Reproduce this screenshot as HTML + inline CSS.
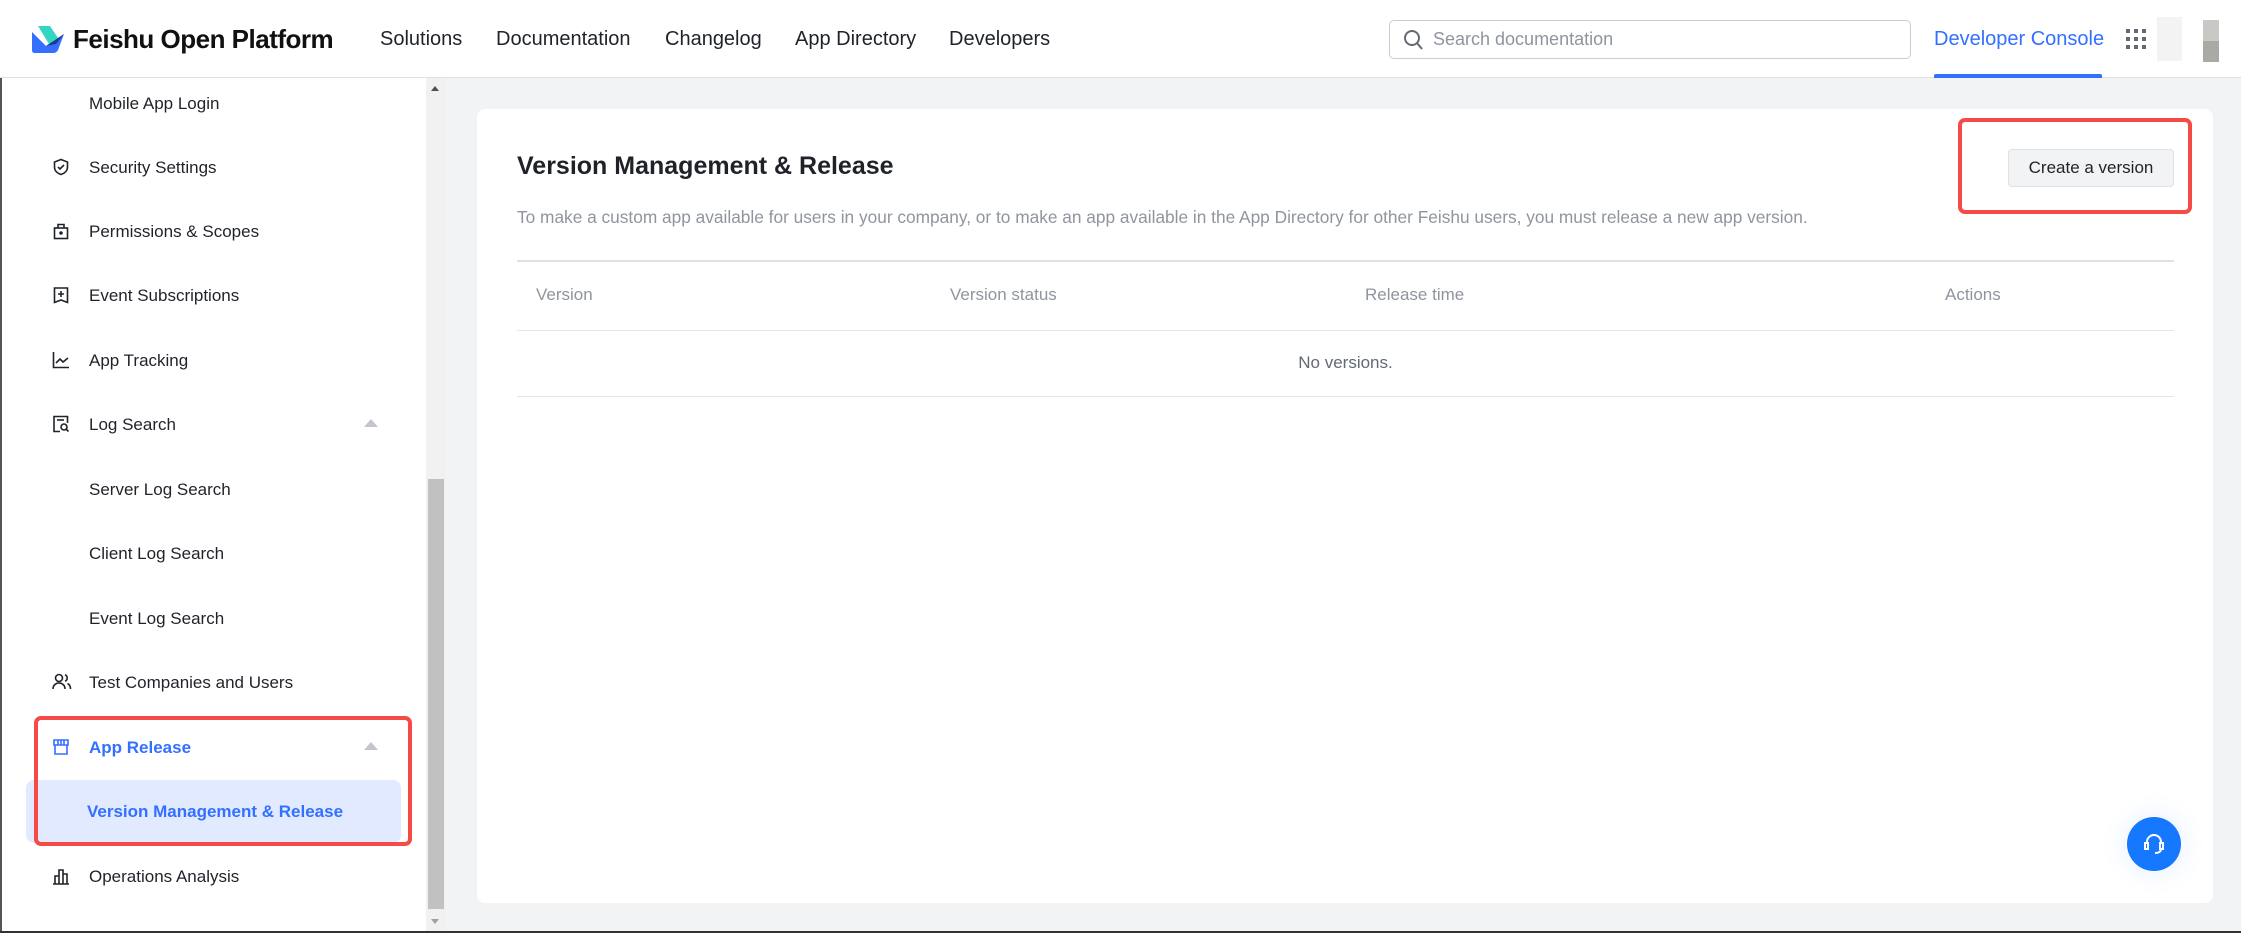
<!DOCTYPE html>
<html><head><meta charset="utf-8"><style>
*{box-sizing:border-box;margin:0;padding:0}
body{width:2241px;height:933px;overflow:hidden;background:#f2f3f5;font-family:"Liberation Sans",Arial,sans-serif;color:#1f2329;position:relative}
.hdr{position:absolute;left:0;top:0;width:2241px;height:78px;background:#fff;border-bottom:1px solid #dee0e3;z-index:5}
.abs{position:absolute;white-space:nowrap}
.nav{font-size:20px;top:28px;color:#1f2329}
.side{position:absolute;left:0;top:0;width:446px;height:933px;background:#fff;border-left:2px solid #555}
.item{position:absolute;left:87px;font-size:17px;color:#1f2329;white-space:nowrap}
.ic{position:absolute;left:50px}
.caret{position:absolute;left:362px;width:0;height:0;border-left:7px solid transparent;border-right:7px solid transparent;border-bottom:8px solid #c2c6cc}
.card{position:absolute;left:477px;top:109px;width:1736px;height:794px;background:#fff;border-radius:8px}
.th{position:absolute;top:285px;font-size:17px;color:#8f959e}
</style></head><body>
<div class="hdr">
  <svg class="abs" style="left:32px;top:24px" width="34" height="30" viewBox="0 0 34 30"><path d="M6 2h12l8 12-9 6z" fill="#33d6c0"/><path d="M0 8l14 14 18-12-6 16c-1 2-3 3-5 3H3c-2 0-3-1-3-3z" fill="#3370ff"/><path d="M14 22L32 10l-8 10z" fill="#1e3a8a"/></svg>
  <div class="abs" style="left:73px;top:24px;font-size:26px;font-weight:bold;letter-spacing:-0.5px;color:#111">Feishu Open Platform</div>
  <div class="abs nav" style="left:380px">Solutions</div>
  <div class="abs nav" style="left:496px">Documentation</div>
  <div class="abs nav" style="left:665px">Changelog</div>
  <div class="abs nav" style="left:795px">App Directory</div>
  <div class="abs nav" style="left:949px">Developers</div>
  <div class="abs" style="left:1389px;top:20px;width:522px;height:39px;border:1px solid #c9cdd4;border-radius:5px"></div>
  <svg class="abs" style="left:1403px;top:29px" width="20" height="22" viewBox="0 0 20 22"><circle cx="9" cy="9" r="7" fill="none" stroke="#646a73" stroke-width="2"/><path d="M14 14l5 6" stroke="#646a73" stroke-width="2"/></svg>
  <div class="abs" style="left:1433px;top:29px;font-size:18px;color:#8f959e">Search documentation</div>
  <div class="abs" style="left:1934px;top:28px;font-size:20px;color:#3370ff">Developer Console</div>
  <div class="abs" style="left:1934px;top:74px;width:168px;height:4px;background:#3370ff;border-radius:2px 2px 0 0"></div>
  <svg class="abs" style="left:2126px;top:29px" width="20" height="20" viewBox="0 0 20 20" fill="#646a73"><rect x="0" y="0" width="4" height="4"/><rect x="8" y="0" width="4" height="4"/><rect x="16" y="0" width="4" height="4"/><rect x="0" y="8" width="4" height="4"/><rect x="8" y="8" width="4" height="4"/><rect x="16" y="8" width="4" height="4"/><rect x="0" y="16" width="4" height="4"/><rect x="8" y="16" width="4" height="4"/><rect x="16" y="16" width="4" height="4"/></svg>
  <div class="abs" style="left:2157px;top:17px;width:25px;height:44px;background:#f3f3f3"></div>
  <div class="abs" style="left:2203px;top:20px;width:16px;height:21px;background:#c8c8c4"></div>
  <div class="abs" style="left:2203px;top:41px;width:16px;height:21px;background:#a9a9a6"></div>
</div>
<div class="side">
  <div class="item" style="top:94px">Mobile App Login</div>
  <svg class="ic" style="top:158px" width="18" height="18" viewBox="0 0 18 18" fill="none" stroke="#1f2329" stroke-width="1.6"><path d="M9 1.5l6.5 2.5v5c0 4-3 6.5-6.5 7.5C5.5 15.5 2.5 13 2.5 9V4z"/><path d="M6 9l2 2 4-4"/></svg>
  <div class="item" style="top:158px">Security Settings</div>
  <svg class="ic" style="top:222px" width="18" height="18" viewBox="0 0 18 18" fill="none" stroke="#1f2329" stroke-width="1.6"><rect x="2.5" y="6" width="13" height="10.5"/><path d="M6 6V2.5h6V6"/><circle cx="9" cy="11" r="1" fill="#1f2329"/></svg>
  <div class="item" style="top:222px">Permissions &amp; Scopes</div>
  <svg class="ic" style="top:286px" width="18" height="18" viewBox="0 0 18 18" fill="none" stroke="#1f2329" stroke-width="1.6"><path d="M2.5 2h13v14.5L9 14l-6.5 2.5z"/><path d="M9 5v6M6 8h6"/></svg>
  <div class="item" style="top:286px">Event Subscriptions</div>
  <svg class="ic" style="top:351px" width="18" height="18" viewBox="0 0 18 18" fill="none" stroke="#1f2329" stroke-width="1.6"><path d="M1.5 1v15.5H17"/><path d="M4 12l4-4 3 3 5-4"/></svg>
  <div class="item" style="top:351px">App Tracking</div>
  <svg class="ic" style="top:415px" width="18" height="18" viewBox="0 0 18 18" fill="none" stroke="#1f2329" stroke-width="1.6"><path d="M8 16.5H2V1.5h13.5V8"/><path d="M5 5h7"/><circle cx="12" cy="12" r="3"/><path d="M14 14l2.5 2.5"/></svg>
  <div class="item" style="top:415px">Log Search</div>
  <div class="caret" style="top:419px"></div>
  <div class="item" style="top:480px">Server Log Search</div>
  <div class="item" style="top:544px">Client Log Search</div>
  <div class="item" style="top:609px">Event Log Search</div>
  <svg class="ic" style="top:673px" width="20" height="18" viewBox="0 0 20 18" fill="none" stroke="#1f2329" stroke-width="1.6"><circle cx="7" cy="5" r="3.5"/><path d="M1 16c0-4 3-6 6-6s6 2 6 6"/><path d="M13 1.8a3.5 3.5 0 010 6.5M15.5 10.5c2 1 3 3 3 5.5"/></svg>
  <div class="item" style="top:673px">Test Companies and Users</div>
  <svg class="ic" style="top:738px" width="18" height="18" viewBox="0 0 18 18" fill="none" stroke="#3370ff" stroke-width="1.6"><path d="M2 2h14v5H2z"/><path d="M3 7v9h12V7"/><path d="M6 2v5M9 2v5M12 2v5"/></svg>
  <div class="item" style="top:738px;color:#3370ff;font-weight:bold">App Release</div>
  <div class="caret" style="top:742px"></div>
  <div style="position:absolute;left:24px;top:780px;width:375px;height:63px;background:#e1eaff;border-radius:8px"></div>
  <div class="item" style="top:802px;color:#3370ff;font-weight:bold;left:85px">Version Management &amp; Release</div>
  <div style="position:absolute;left:32px;top:716px;width:378px;height:130px;border:4px solid #f54a45;border-radius:7px"></div>
  <svg class="ic" style="top:867px" width="18" height="18" viewBox="0 0 18 18" fill="none" stroke="#1f2329" stroke-width="1.6"><path d="M1 17h16M3 17V9h4v8M7 17V3h4v14M11 17V7h4v10"/></svg>
  <div class="item" style="top:867px">Operations Analysis</div>
  <div style="position:absolute;left:424px;top:78px;width:20px;height:853px;background:#f1f1f1"></div>
  <div style="position:absolute;left:426px;top:479px;width:16px;height:430px;background:#c1c1c1"></div>
  <div style="position:absolute;left:429px;top:86px;border-left:4px solid transparent;border-right:4px solid transparent;border-bottom:5px solid #505050"></div>
  <div style="position:absolute;left:429px;top:919px;border-left:4px solid transparent;border-right:4px solid transparent;border-top:5px solid #a0a0a0"></div>
</div>
<div style="position:absolute;left:0;top:931px;width:2241px;height:2px;background:#333"></div>
<div class="card"></div>
<div class="abs" style="left:517px;top:152px;font-size:25px;font-weight:bold;color:#1f2329">Version Management &amp; Release</div>
<div class="abs" style="left:517px;top:207px;font-size:17.3px;color:#8f959e">To make a custom app available for users in your company, or to make an app available in the App Directory for other Feishu users, you must release a new app version.</div>
<div class="abs" style="left:2008px;top:149px;width:166px;height:38px;background:#f2f3f5;border:1px solid #dee0e3;border-radius:4px;font-size:17px;line-height:36px;text-align:center;color:#1f2329">Create a version</div>
<div class="abs" style="left:1958px;top:118px;width:234px;height:96px;border:4px solid #f54a45;border-radius:7px"></div>
<div class="abs" style="left:517px;top:260px;width:1657px;height:2px;background:#dee0e3"></div>
<div class="abs th" style="left:536px">Version</div>
<div class="abs th" style="left:950px">Version status</div>
<div class="abs th" style="left:1365px">Release time</div>
<div class="abs th" style="left:1945px">Actions</div>
<div class="abs" style="left:517px;top:330px;width:1657px;height:1px;background:#e5e6eb"></div>
<div class="abs" style="left:517px;top:353px;width:1657px;text-align:center;font-size:17px;color:#646a73">No versions.</div>
<div class="abs" style="left:517px;top:396px;width:1657px;height:1px;background:#e5e6eb"></div>
<div class="abs" style="left:2127px;top:817px;width:54px;height:54px;border-radius:50%;background:#1677ff;box-shadow:0 0 20px 8px rgba(22,119,255,0.06)"></div>
<svg class="abs" style="left:2141px;top:831px" width="26" height="26" viewBox="0 0 26 26" fill="none" stroke="#fff" stroke-width="2"><path d="M6 13V11a7 7 0 0114 0v2"/><rect x="4" y="12" width="3" height="6"/><rect x="19" y="12" width="3" height="6"/><path d="M20 18c0 3-3 4-6 4"/></svg>
</body></html>
